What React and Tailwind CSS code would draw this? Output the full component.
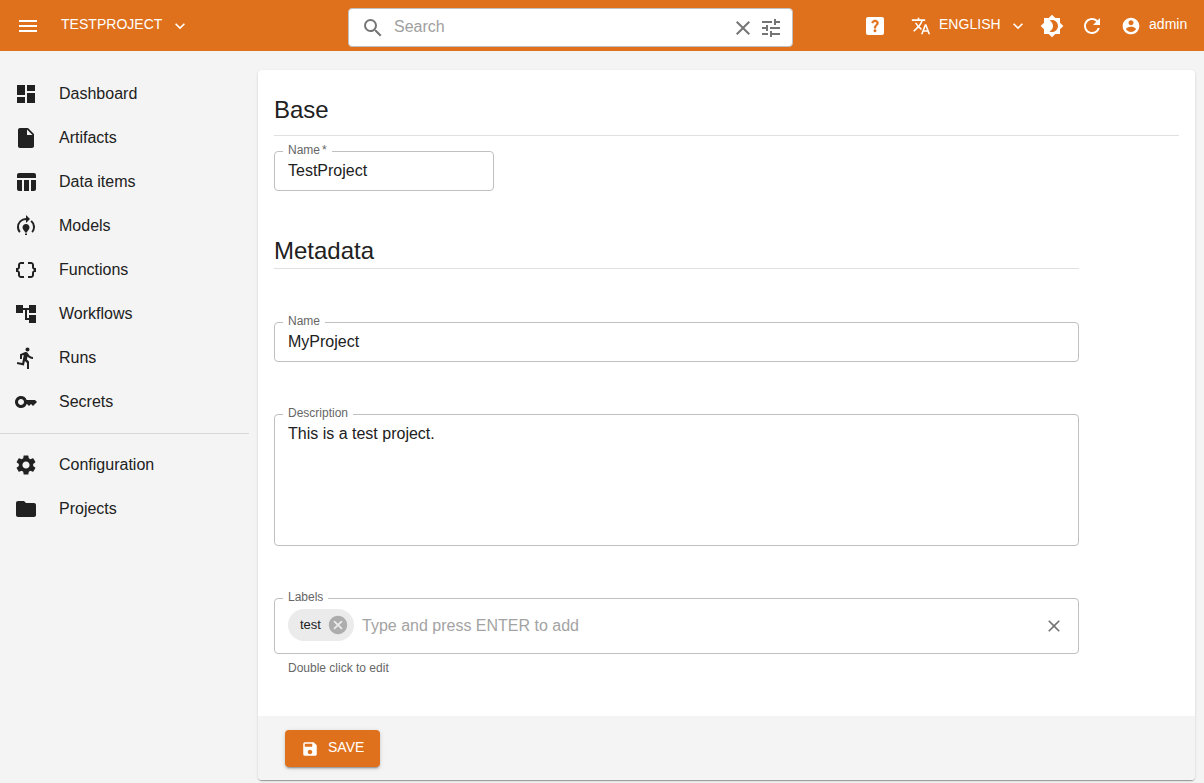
import {
  MdMenu, MdExpandMore, MdSearch, MdClear, MdTune, MdTranslate, MdBrightness4, MdRefresh,
  MdDashboard, MdInsertDriveFile, MdModelTraining, MdDataObject,
  MdAccountTree, MdDirectionsRun, MdKey, MdSettings, MdFolder, MdCancel, MdSave,
} from "react-icons/md";

function TableIcon() {
  return (
    <svg viewBox="0 0 24 24" width="24" height="24" fill="currentColor">
      <path d="M10 10.02h5V21h-5V10.02zM17 21h3c1.1 0 2-.9 2-2v-9h-5v11zm3-18H5c-1.1 0-2 .9-2 2v3h19V5c0-1.1-.9-2-2-2zM3 19c0 1.1.9 2 2 2h3V10H3v9z" />
    </svg>
  );
}

function HelpIcon() {
  return (
    <svg viewBox="0 0 24 24" width="24" height="24">
      <rect x="3" y="3" width="18" height="18" rx="2" fill="currentColor" />
      <path fill="#e0711c" stroke="#e0711c" strokeWidth="0.5" d="M12.01 18c-.7 0-1.26-.56-1.26-1.26 0-.71.56-1.25 1.26-1.25.71 0 1.25.54 1.25 1.25-.01.69-.54 1.26-1.25 1.26zm3.01-7.4c-.76 1.11-1.48 1.46-1.87 2.17-.16.29-.22.48-.22 1.41h-1.82c0-.49-.08-1.29.31-1.98.49-.87 1.42-1.39 1.96-2.16.57-.81.25-2.33-1.37-2.33-1.06 0-1.58.8-1.8 1.48l-1.65-.7C9.01 7.15 10.22 6 11.99 6c1.48 0 2.49.67 3.01 1.52.44.72.7 2.07.02 3.08z" />
    </svg>
  );
}

function AccountIcon() {
  return (
    <svg viewBox="0 0 24 24" width="20" height="20" fill="currentColor" className="ml-[17px]">
      <path d="M12 2C6.48 2 2 6.48 2 12s4.48 10 10 10 10-4.48 10-10S17.52 2 12 2zm0 3c1.66 0 3 1.34 3 3s-1.34 3-3 3-3-1.34-3-3 1.34-3 3-3zm0 14.2c-2.5 0-4.71-1.28-6-3.22.03-1.99 4-3.08 6-3.08 1.99 0 5.97 1.09 6 3.08-1.29 1.94-3.5 3.22-6 3.22z" />
    </svg>
  );
}

const mainItems = [
  [MdDashboard, "Dashboard"],
  [MdInsertDriveFile, "Artifacts"],
  [TableIcon, "Data items"],
  [MdModelTraining, "Models"],
  [MdDataObject, "Functions"],
  [MdAccountTree, "Workflows"],
  [MdDirectionsRun, "Runs"],
  [MdKey, "Secrets"],
];
const adminItems = [
  [MdSettings, "Configuration"],
  [MdFolder, "Projects"],
];

function NavList({ items }) {
  return (
    <ul>
      {items.map(([Icon, label]) => (
        <li key={label} className="flex h-11 items-center pl-3.5">
          <Icon size={24} />
          <span className="ml-[21px]">{label}</span>
        </li>
      ))}
    </ul>
  );
}

function Field({ label, className, children }) {
  return (
    <fieldset className={"rounded-[4px] border border-[#c0c0c0] px-[13px] " + className}>
      <legend className="-ml-[5px] h-[11px] px-[5px] text-xs leading-[9px] text-[#666]">{label}</legend>
      {children}
    </fieldset>
  );
}

export default function App() {
  return (
    <div className="flex h-[783px] w-[1204px] flex-col overflow-hidden bg-[#f4f4f4] font-['Liberation_Sans',Arial,sans-serif] text-base text-[#212121]">
      <header className="flex h-[51px] shrink-0 items-center bg-[#e0711c] text-sm text-white">
        <MdMenu size={24} className="ml-4" />
        <span className="mb-[3px] ml-[21px] w-[109px] tracking-[0.03px]">TESTPROJECT</span>
        <MdExpandMore size={20} className="" />
        <div className="mt-1 ml-[158px] flex h-[39px] w-[445px] items-center rounded-[4px] border border-[#c0c0c0] bg-white pl-3 text-[#757575]">
          <MdSearch size={24} />
          <span className="mb-0.5 ml-[9px] flex-1 text-base text-[#a0a0a0]">Search</span>
          <MdClear size={24} />
          <MdTune size={24} className="mr-[9px] ml-1" />
        </div>
        <div className="ml-[70px] flex"><HelpIcon /></div>
        <MdTranslate size={20} className="ml-6" />
        <span className="mb-[3px] ml-2 w-[62px] tracking-[0.03px]">ENGLISH</span>
        <MdExpandMore size={20} className="ml-[7px]" />
        <MdBrightness4 size={24} className="ml-3" />
        <MdRefresh size={24} className="ml-4" />
        <AccountIcon />
        <span className="mb-[3px] ml-2 tracking-[0.03px]">admin</span>
      </header>
      <div className="flex flex-1">
        <nav className="w-[249px] shrink-0 pt-[21px]">
          <NavList items={mainItems} />
          <hr className="mt-[9px] mb-[9px] border-[#d8d8d8]" />
          <NavList items={adminItems} />
        </nav>
        <main className="mt-[19px] ml-[9px] flex h-[710px] w-[937px] flex-col overflow-hidden rounded-[4px] bg-white shadow-[0_2px_1px_-1px_rgba(0,0,0,0.2),0_1px_1px_0_rgba(0,0,0,0.14),0_1px_3px_0_rgba(0,0,0,0.12)]">
          <div className="h-[646px] px-4 pt-6">
            <h2 className="h-[42px] border-b border-[#e0e0e0] text-2xl leading-8">Base</h2>
            <Field className="mt-[10px] h-[45px] w-[220px]" label={<>Name<span className="ml-0.5">*</span></>}>
              <div className="pt-1 leading-5">TestProject</div>
            </Field>
            <div className="w-[805px]">
              <h2 className="mt-[44px] h-[34px] border-b border-[#e0e0e0] text-2xl leading-8">Metadata</h2>
              <Field className="mt-[48px] h-[45px]" label="Name">
                <div className="pt-1 leading-5">MyProject</div>
              </Field>
              <Field className="mt-[47px] h-[137px]" label="Description">
                <div className="pt-1 leading-5">This is a test project.</div>
              </Field>
              <Field className="mt-[47px] h-[61px]" label="Labels">
                <div className="flex items-center pt-[5px] pr-px">
                  <span className="flex h-8 w-[66px] items-center rounded-full bg-[#ebebeb] pl-3 text-[13px]">
                    test
                    <MdCancel size={22} className="ml-[6px] text-[#adadad]" />
                  </span>
                  <span className="mt-px ml-2 flex-1 text-[#a3a3a3]">Type and press ENTER to add</span>
                  <MdClear size={20} className="mt-0.5 text-[#757575]" />
                </div>
              </Field>
              <p className="mt-1 ml-3.5 text-xs leading-5 text-[#666]">Double click to edit</p>
            </div>
          </div>
          <footer className="h-16 bg-[#f4f4f4] pt-3.5 pl-[27px]">
            <button className="flex h-[37px] w-[95px] items-center rounded-[4px] bg-[#e0711c] pl-4 text-sm text-white shadow-[0_3px_1px_-2px_rgba(0,0,0,0.2),0_2px_2px_0_rgba(0,0,0,0.14),0_1px_5px_0_rgba(0,0,0,0.12)]">
              <MdSave size={18} />
              <span className="mb-[3px] ml-[9px]">SAVE</span>
            </button>
          </footer>
        </main>
      </div>
    </div>
  );
}
